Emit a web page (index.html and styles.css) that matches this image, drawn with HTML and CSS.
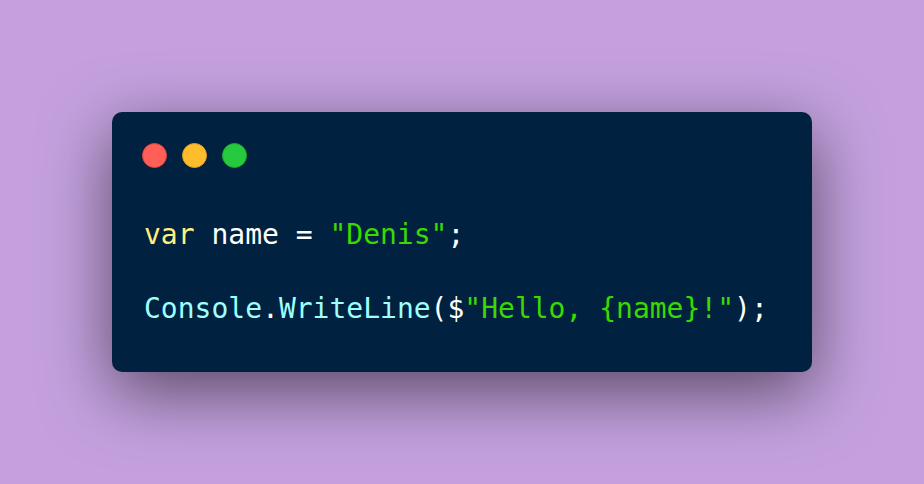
FILE: index.html
```html
<!DOCTYPE html>
<html>
<head>
<meta charset="utf-8">
<link rel="stylesheet" href="styles.css">
</head>
<body>
<div class="stage">
  <div class="window">
    <div class="controls">
      <span class="dot red"></span>
      <span class="dot yellow"></span>
      <span class="dot green"></span>
    </div>
    <pre class="code"><span class="kw">var</span> name = <span class="str">"Denis"</span>;

<span class="cls">Console</span>.<span class="cls">WriteLine</span>($<span class="str">"Hello, {name}!"</span>);</pre>
  </div>
</div>
</body>
</html>
```

FILE: styles.css
```css
html, body {
  margin: 0;
  padding: 0;
}
.stage {
  width: 924px;
  height: 484px;
  background: #c4a1de;
  display: flex;
  align-items: center;
  justify-content: center;
}
.window {
  width: 700px;
  height: 260px;
  box-sizing: border-box;
  background: #002240;
  border-radius: 10px;
  box-shadow: 0 20px 68px rgba(0, 0, 0, 0.55);
  padding: 31px 32px 0 32px;
  display: flex;
  flex-direction: column;
}
.controls {
  display: flex;
  gap: 15px;
  margin-left: -2px;
}
.dot {
  width: 25px;
  height: 25px;
  border-radius: 50%;
  box-sizing: border-box;
}
.red { background: #ff5f56; border: 1px solid #e0443e; }
.yellow { background: #ffbd2e; border: 1px solid #dea123; }
.green { background: #27c93f; border: 1px solid #1aab29; }
.code {
  margin: 48px 0 0 0;
  font-family: "DejaVu Sans Mono", monospace;
  font-size: 28px;
  line-height: 37px;
  color: #ffffff;
}
.kw { color: #ffee80; }
.str { color: #3ad900; }
.cls { color: #9effff; }
```
